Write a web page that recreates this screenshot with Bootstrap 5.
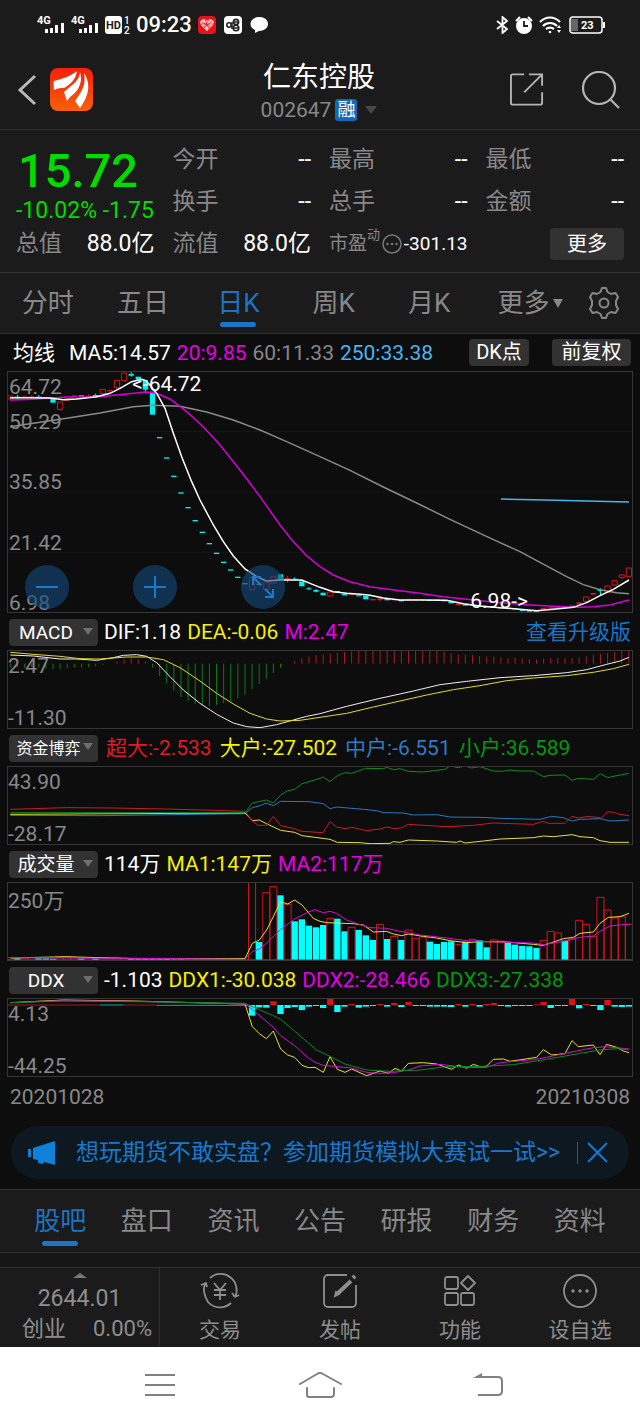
<!DOCTYPE html>
<html lang="zh-CN">
<head>
<meta charset="utf-8">
<meta name="viewport" content="width=device-width, initial-scale=1">
<title>仁东控股 002647</title>
<link href="https://cdn.jsdelivr.net/npm/bootstrap@5.3.0/dist/css/bootstrap.min.css" rel="stylesheet">
<style>
  :root { --panel:#1b1b1b; --ink:#0d0d0d; --line:#303030; --muted:#88888a; --brand:#1c74c4; --down:#00dc00; --up:#e0141e; --mag:#e600e6; --yel:#f5f000; --sky:#4ab4f0; --leaf:#009a10; }
  body { background:var(--ink); color:#fff; font-family:Roboto,"Noto Sans CJK SC",sans-serif; font-size:21px; line-height:28px; }
  button, select { font-family:inherit; color:inherit; line-height:inherit; }
  button { background:none; border:0; padding:0; }
  a { text-decoration:none; }
  svg { display:block; flex-shrink:0; }
  .panel { background:var(--panel); }
  .rule-b { border-bottom:1px solid var(--line); }
  .rule-t { border-top:1px solid var(--line); }
  .dim { color:var(--muted); }
  .brand { color:var(--brand); }
  .mag { color:var(--mag); }
  .yel { color:var(--yel); }
  .sky { color:var(--sky); }
  .leaf { color:var(--leaf); }
  .crimson { color:#e01a28; }
  .steel { color:#2e7cc8; }
  .status { height:50px; padding:0 34px 0 37px; font-size:22px; font-weight:500; }
  .status > div { gap:6px; }
  .apps { gap:8px; }
  .topbar { height:80px; padding:0 16px; }
  .actions { gap:38px; }
  .heading { padding:4px 0 0 2px; }
  .name { font-size:28px; line-height:36px; font-weight:400; }
  .rong { background:#1469b4; font-size:18px; line-height:22px; width:22px; height:22px; border-radius:3px; text-align:center; }
  .caret { width:0; height:0; border:6px solid transparent; border-top:8px solid #484848; border-bottom:0; }
  .caret-s { border-width:5px; border-top:9px solid var(--muted); border-bottom:0; }
  .quote { display:grid; grid-template-columns:repeat(4,minmax(0,1fr)); grid-auto-rows:42px; column-gap:18px; padding:9px 16px 7px; font-size:23px; white-space:nowrap; }
  .last-price { grid-row:span 2; color:var(--down); }
  .last-price strong { font-size:47px; line-height:52px; font-weight:500; padding:6px 0 0 2px; }
  .last-price span { font-size:23px; line-height:28px; }
  .pe { font-size:19px; }
  .pe sup { font-size:13px; line-height:14px; top:-11px; }
  .chip { background:#323233; border-radius:4px; color:#fff; height:27px; font-size:20px; line-height:27px; }
  .chip-dk { width:60px; margin-right:17px; }
  .chip-fq { width:79px; }
  .more-btn { width:74px; height:32px; line-height:32px; }
  .ktabs { height:61px; font-size:26px; }
  .ktabs .tab { flex:0 0 14.9%; }
  .tab { height:100%; position:relative; color:var(--muted); }
  .tab.active { color:var(--brand); }
  .tab.active::after { content:""; position:absolute; left:50%; bottom:6px; width:36px; margin-left:-18px; height:5px; border-radius:3px; background:var(--brand); }
  .legend-row { height:37px; padding:0 9px; gap:6px; white-space:nowrap; }
  .legend-wide { gap:8px; }
  .pick { position:relative; width:89px; }
  .pick select { appearance:none; width:100%; border:0; padding:0 15px 0 0; font-size:19px; text-align:center; text-align-last:center; }
  .pick::after { content:""; position:absolute; right:5px; top:10px; border:5px solid transparent; border-top:7px solid #6e6e6e; border-bottom:0; pointer-events:none; }
  .pick select.four { font-size:16px; padding-right:10px; }
  .plot { position:relative; margin:0 7px; }
  .plot svg { width:100%; height:79px; fill:none; }
  .plot-main svg { height:242px; }
  .plot .frame { position:absolute; inset:0; border:1px solid #363636; }
  .plot svg * { vector-effect:non-scaling-stroke; stroke-width:1; }
  .plot-main svg polyline { stroke-width:1.5; }
  .axis { position:absolute; inset:0; padding:6px 0 1px 1px; line-height:20px; color:var(--muted); }
  .axis-low { padding-top:9px; }
  .axis-main { padding:0 0 0 2px; }
  .axis-main span { flex:1 1 0; display:flex; align-items:flex-end; }
  .axis-main .peak { position:absolute; top:6px; }
  .note { position:absolute; line-height:20px; }
  .note-high { left:20%; top:3px; }
  .note-low { left:74%; bottom:2px; }
  .zoomers { position:absolute; left:18px; bottom:4px; gap:64px; }
  .round { width:44px; height:44px; border-radius:50%; background:rgba(20,72,122,.62); display:flex; align-items:center; justify-content:center; }
  .plot .round svg { width:28px; height:28px; stroke:#1d78cc; }
  .plot .round svg * { stroke-width:2; }
  .dates { height:39px; padding:0 10px; }
  .promo { margin:10px 11px; height:53px; border-radius:27px; background:#0d1820; padding:0 20px 0 17px; font-size:23px; color:#1a78cc; white-space:nowrap; }
  .promo a { color:inherit; }
  .promo .sep { width:1px; height:22px; background:#1a60a0; }
  .subtabs { height:64px; padding:0 17px; font-size:26px; }
  .subtabs .tab { flex:1 1 0; }
  .strip { height:14px; background:#161616; }
  .dock { height:80px; font-size:21px; line-height:30px; color:#8e8e8e; }
  .dock button svg { margin:4px 0 5px; }
  .index-box { border-right:1px solid var(--line); padding-top:5px; font-size:23px; }
  .index-box .up { border:7px solid transparent; border-bottom:5px solid #777; border-top:0; width:0; height:0; margin:0 auto 6px; }
  .index-box .pair { padding:0 7px 0 22px; font-size:22px; }
  .sysbar { background:#fff; height:75px; padding:0 12.5%; }
</style>
</head>
<body>
<header class="panel">
  <div class="status d-flex align-items-center justify-content-between">
    <div class="d-flex align-items-center">
      <svg width="28" height="20" viewBox="0 0 28 20" fill="#fff" aria-label="4G"><text x="0" y="9" font-size="11" font-weight="700">4G</text><path d="M8 14h3v4H8zM13 13h3v5h-3zM18 10h3v8h-3zM24 8h3v10h-3z"/></svg>
      <svg width="28" height="20" viewBox="0 0 28 20" fill="#fff" aria-label="4G"><text x="0" y="9" font-size="11" font-weight="700">4G</text><path d="M8 14h3v4H8zM13 13h3v5h-3zM18 10h3v8h-3zM24 8h3v10h-3z"/></svg>
      <svg width="25" height="20" viewBox="0 0 25 20"><rect y="1" width="17" height="18" rx="3" fill="#fff"/><text x="1" y="14" font-size="11" font-weight="700" fill="#1b1b1b">HD</text><text x="19" y="9" font-size="10" fill="#fff">1</text><text x="19" y="19" font-size="10" fill="#fff">2</text></svg>
      <span>09:23</span>
      <div class="apps d-flex">
        <svg width="18" height="18" viewBox="0 0 18 18"><rect width="18" height="18" rx="4" fill="#e5141c"/><path d="M9 15L3 9C0 5 6 1 9 5c3-4 9 0 6 4z" fill="#ffd7d7"/><path d="M4 6l10 6M14 5L6 12M7 4l4 9M11 4l-5 7M2 8h14" stroke="#e5141c" stroke-width=".8"/></svg>
        <svg width="18" height="18" viewBox="0 0 18 18"><rect width="18" height="18" rx="4" fill="#fff"/><g fill="none" stroke="#222" stroke-width="1.600"><circle cx="5" cy="9" r="2.200"/><path d="M8 6v7"/><circle cx="12" cy="6" r="2.600"/><circle cx="12" cy="12" r="2.800"/><path d="M10 6h4M10 12h4"/></g></svg>
        <svg width="19" height="18" viewBox="0 0 19 18"><path d="M9.500 1C4.500 1 .5 4 .5 8c0 3 2 5 4.500 6L5 17l4-2c5 0 9-3 9-7s-3.500-7-8.500-7z" fill="#fff"/></svg>
      </div>
    </div>
    <div class="d-flex align-items-center">
      <svg width="13" height="18" viewBox="0 0 13 18" fill="none" stroke="#fff" stroke-width="1.800"><path d="M1 5l10 8-4.500 4V1L11 5 1 13"/></svg>
      <svg width="18" height="18" viewBox="0 0 18 18"><circle cx="9" cy="10" r="8" fill="#fff"/><path d="M1 5l4-4M17 5l-4-4" stroke="#fff" stroke-width="2"/><path d="M9 5v5h4" fill="none" stroke="#1b1b1b" stroke-width="1.800"/></svg>
      <svg width="24" height="18" viewBox="0 0 24 18" fill="none" stroke="#fff" stroke-width="2.200"><path d="M1 6c6-6 14-6 20 0M4 10c4-4 10-4 14 0M7 13c3-2 5-2 8 0"/><circle cx="11" cy="16" r="1.300" fill="#fff" stroke="none"/><path d="M18 12l2-3 2 3zM18 14l2 3 2-3z" fill="#fff" stroke="none"/></svg>
      <svg width="37" height="18" viewBox="0 0 37 18"><rect x="1" y="1" width="32" height="16" rx="3" fill="none" stroke="#fff" stroke-width="1.500"/><path d="M2 3h7v12H2z" fill="#666"/><path d="M34 6h2v6h-2z" fill="#fff"/><text x="12" y="13" font-size="11" font-weight="700" fill="#fff">23</text></svg>
    </div>
  </div>
  <div class="topbar rule-b d-flex align-items-center">
    <div class="d-flex align-items-center col">
      <button type="button" aria-label="返回"><svg width="22" height="32" viewBox="0 0 22 32" fill="none" stroke="#b8b8b8" stroke-width="3"><path d="M19 2L4 16l15 14"/></svg></button>
      <a href="#" class="ms-2 ps-1" aria-label="首页"><svg width="43" height="43" viewBox="0 0 43 43"><defs><linearGradient id="lg" x2="0" y2="1"><stop stop-color="#f5200a"/><stop offset="1" stop-color="#f7600a"/></linearGradient></defs><rect width="43" height="43" rx="8" fill="url(#lg)"/><path d="M27 3C20 9 11 11 4 13c-1 3 0 6 0 9 4-2 7-2 10-2 7-4 12-9 13-17zM30 4c0 8-8 13-16 20l3 9c3-5 8-7 11-12 3-6 4-10 2-17zM34 5c2 11-1 17-9 28l5 7c7-10 9-17 8-25-1-5-2-7-4-10z" fill="#fff"/></svg></a>
    </div>
    <div class="heading text-center">
      <h1 class="name mb-0">仁东控股</h1>
      <div class="d-flex align-items-center justify-content-center gap-1"><span class="dim">002647</span><span class="rong">融</span><span class="caret ms-1"></span></div>
    </div>
    <div class="col d-flex justify-content-end align-items-center actions pe-1">
      <button type="button" aria-label="分享"><svg width="34" height="35" viewBox="0 0 36 36" fill="none" stroke="#b4b4b4" stroke-width="2"><path d="M15 2H3q-2 0-2 2v28q0 2 2 2h29q2 0 2-2V21M34 14V2H20M34 2L15 21"/></svg></button>
      <button type="button" aria-label="搜索"><svg width="38" height="38" viewBox="0 0 38 38" fill="none" stroke="#b4b4b4" stroke-width="2.200"><circle cx="17" cy="17" r="16"/><path d="M28 28l9 9"/></svg></button>
    </div>
  </div>
</header>

<main>
  <section class="quote panel rule-b">
    <div class="last-price d-flex flex-column"><strong>15.72</strong><span>-10.02% -1.75</span></div>
    <div class="d-flex justify-content-between align-items-center"><span class="dim">今开</span><span>--</span></div>
    <div class="d-flex justify-content-between align-items-center"><span class="dim">最高</span><span>--</span></div>
    <div class="d-flex justify-content-between align-items-center"><span class="dim">最低</span><span>--</span></div>
    <div class="d-flex justify-content-between align-items-center"><span class="dim">换手</span><span>--</span></div>
    <div class="d-flex justify-content-between align-items-center"><span class="dim">总手</span><span>--</span></div>
    <div class="d-flex justify-content-between align-items-center"><span class="dim">金额</span><span>--</span></div>
    <div class="d-flex justify-content-between align-items-center"><span class="dim">总值</span><span>88.0亿</span></div>
    <div class="d-flex justify-content-between align-items-center"><span class="dim">流值</span><span>88.0亿</span></div>
    <div class="pe d-flex justify-content-between align-items-center"><span class="dim">市盈<sup>动</sup></span><svg width="20" height="20" viewBox="0 0 20 20" fill="#777"><circle cx="10" cy="10" r="9" fill="none" stroke="#777" stroke-width="1.500"/><circle cx="5.500" cy="10" r="1.200"/><circle cx="10" cy="10" r="1.200"/><circle cx="14.500" cy="10" r="1.200"/></svg><span>-301.13</span></div>
    <div class="d-flex justify-content-end align-items-center"><button type="button" class="chip more-btn">更多</button></div>
  </section>

  <nav class="ktabs panel rule-b d-flex align-items-center">
    <button type="button" class="tab">分时</button>
    <button type="button" class="tab">五日</button>
    <button type="button" class="tab active">日K</button>
    <button type="button" class="tab">周K</button>
    <button type="button" class="tab">月K</button>
    <button type="button" class="tab flex-fill d-flex align-items-center justify-content-center gap-1 ps-1">更多<span class="caret caret-s"></span></button>
    <button type="button" class="ps-2 pe-3 me-1" aria-label="设置"><svg width="32" height="32" viewBox="0 0 32 32" fill="none" stroke="#88888a" stroke-width="2"><path d="M12.500 5L14 1h4l1.500 4 3.500 2 4.500-1L30 10l-2 4v4l2 4-2.500 4-4.500-1-3.500 2-1.500 4h-4l-1.500-4L9 25l-4.500 1L2 22l2-4v-4l-2-4 2.500-4L9 7z" stroke-linejoin="round"/><circle cx="16" cy="16" r="4.500"/></svg></button>
  </nav>

  <section>
    <div class="legend-row d-flex align-items-center">
      <span class="px-1 me-1">均线</span>
      <span>MA5:14.57</span><span class="mag">20:9.85</span><span class="dim">60:11.33</span><span class="sky">250:33.38</span>
      <button type="button" class="chip chip-dk ms-auto">DK点</button>
      <button type="button" class="chip chip-fq">前复权</button>
    </div>
    <div class="plot plot-main">
      <div class="axis axis-main d-flex flex-column"><span class="peak">64.72</span><span>50.29</span><span>35.85</span><span>21.42</span><span>6.98</span></div>
      <svg id="kline" viewBox="21 123 1878 726" preserveAspectRatio="none" role="img" aria-label="日K线">
        <path d="M22 305H1898M22 486H1898M22 667H1898" stroke="#222" stroke-dasharray="1 1"/>
        <g class="bars"></g>
        <polyline stroke="#8a8a8a" points="30,290 100,280 200,265 300,249 400,230 460,226 540,229 620,246 700,270 780,300 860,335 960,380 1050,421 1150,471 1250,519 1350,568 1440,610 1500,638 1560,665 1620,697 1700,740 1750,764 1800,779 1850,788 1887,791"/>
        <polyline stroke="#d800d8" points="30,210 100,208 200,201 300,200 380,192 436,186 468,189 510,207 560,245 610,290 660,345 720,420 780,500 840,585 880,635 920,677 960,710 1000,735 1050,755 1110,770 1200,782 1260,790 1330,800 1400,808 1500,818 1580,824 1660,829 1730,832 1780,830 1830,825 1887,810"/>
        <polyline stroke="#fff" points="30,203 90,203 150,204 190,209 230,207 290,200 330,190 360,175 395,155 425,148 436,151 450,165 472,193 495,235 520,310 545,380 575,455 600,510 640,585 670,635 700,678 735,717 770,740 799,753 842,750 905,750 930,760 960,772 1000,785 1040,790 1080,793 1110,796 1150,804 1200,810 1260,810 1340,811 1390,821 1440,828 1500,833 1560,838 1610,842 1660,838 1720,832 1760,818 1800,797 1840,778 1887,750"/>
        <polyline stroke="#4ab4e8" points="1503,507 1600,509 1760,513 1887,516"/>
      </svg>
      <div class="frame"></div>
      <span class="note note-high">&lt;-64.72</span>
      <span class="note note-low">6.98-&gt;</span>
      <div class="zoomers d-flex">
        <button type="button" class="round" aria-label="缩小"><svg viewBox="0 0 28 28"><path d="M3 14h22"/></svg></button>
        <button type="button" class="round" aria-label="放大"><svg viewBox="0 0 28 28"><path d="M3 14h22M14 3v22"/></svg></button>
        <button type="button" class="round" aria-label="全屏"><svg viewBox="0 0 28 28"><path d="M4 12V4h8M4 4l8 8M24 16v8h-8M24 24l-8-8"/></svg></button>
      </div>
    </div>
  </section>

  <section>
    <div class="legend-row d-flex align-items-center">
      <label class="pick"><select class="chip" aria-label="指标一"><option>MACD</option></select></label>
      <span>DIF:1.18</span><span class="yel">DEA:-0.06</span><span class="mag">M:2.47</span>
      <a href="#" class="brand ms-auto">查看升级版</a>
    </div>
    <div class="plot">
      <div class="axis d-flex flex-column justify-content-between"><span>2.47</span><span>-11.30</span></div>
      <svg id="macd" viewBox="21 15 1878 237" preserveAspectRatio="none" role="img" aria-label="MACD">
        <g class="bars"></g>
        <polyline stroke="#eee" points="31,30 100,33 180,42 230,42 290,46 340,38 370,31 410,29 440,34 470,53 510,95 550,135 600,175 650,208 700,234 740,245 780,248 830,239 880,225 920,214 960,206 1040,184 1140,160 1240,138 1320,119 1400,109 1500,98 1600,92 1700,83 1760,74 1820,58 1860,48 1887,37"/>
        <polyline stroke="#e0dc20" points="31,22 100,28 180,34 240,41 300,42 380,36 440,36 490,44 540,68 600,108 650,145 700,177 750,205 800,222 840,228 900,226 960,217 1040,205 1120,186 1200,168 1280,150 1360,134 1440,122 1520,107 1600,99 1700,92 1780,82 1840,71 1887,58"/>
      </svg>
      <div class="frame"></div>
    </div>
  </section>

  <section>
    <div class="legend-row legend-wide d-flex align-items-center">
      <label class="pick"><select class="chip four" aria-label="指标二"><option>资金博弈</option></select></label>
      <span class="crimson">超大:-2.533</span><span class="yel">大户:-27.502</span><span class="steel">中户:-6.551</span><span class="leaf">小户:36.589</span>
    </div>
    <div class="plot">
      <div class="axis d-flex flex-column justify-content-between"><span>43.90</span><span>-28.17</span></div>
      <svg viewBox="21 363 1878 237" preserveAspectRatio="none" role="img" aria-label="资金博弈">
        <polyline stroke="#2878c0" points="31,511 300,512 735,506 757,488 777,483 799,474 820,482 842,469 927,470 970,476 990,491 1010,486 1090,493 1130,497 1150,503 1210,504 1240,510 1310,509 1350,516 1440,517 1500,520 1620,523 1655,514 1690,518 1715,528 1740,523 1800,521 1830,528 1887,525"/>
        <polyline stroke="#e8e030" points="31,508 735,504 757,527 778,525 799,536 842,556 884,562 906,572 960,579 990,583 1012,592 1080,593 1110,596 1170,595 1180,590 1200,592 1225,585 1310,588 1370,592 1380,588 1395,594 1450,588 1500,582 1600,578 1630,573 1660,575 1716,569 1740,575 1780,578 1800,587 1830,592 1887,592"/>
        <polyline stroke="#d01824" points="31,493 200,488 340,489 500,492 640,496 735,499 757,528 775,541 800,541 820,514 842,542 880,550 906,559 969,563 990,530 1010,546 1035,551 1055,547 1100,557 1140,552 1160,546 1185,551 1205,548 1225,538 1340,545 1420,541 1480,534 1600,538 1630,529 1645,535 1695,535 1716,514 1735,519 1765,514 1805,519 1822,500 1840,502 1860,508 1887,512"/>
        <polyline stroke="#0a8c1e" points="31,503 735,503 757,474 799,465 820,474 842,450 863,437 884,433 906,416 927,410 960,400 970,396 990,410 1012,392 1034,383 1055,385 1097,370 1150,371 1160,367 1180,374 1200,371 1225,379 1270,381 1310,376 1335,373 1350,363 1375,368 1395,363 1415,369 1440,365 1480,378 1505,379 1530,375 1560,378 1600,378 1630,395 1650,391 1695,390 1715,406 1735,400 1780,403 1801,386 1823,398 1845,393 1887,385"/>
      </svg>
      <div class="frame"></div>
    </div>
  </section>

  <section>
    <div class="legend-row d-flex align-items-center">
      <label class="pick"><select class="chip" aria-label="指标三"><option>成交量</option></select></label>
      <span>114万</span><span class="yel">MA1:147万</span><span class="mag">MA2:117万</span>
    </div>
    <div class="plot">
      <div class="axis axis-low"><span>250万</span></div>
      <svg id="volume" viewBox="21 96 1878 237" preserveAspectRatio="none" role="img" aria-label="成交量">
        <g class="bars"></g>
        <polyline stroke="#e8e030" points="31,324 200,320 360,325 540,326 735,326 757,280 778,270 800,240 842,155 863,162 884,150 906,165 940,205 960,214 980,218 1060,221 1090,225 1120,246 1160,244 1180,252 1205,257 1225,252 1270,259 1310,264 1350,272 1400,278 1440,275 1520,276 1600,283 1630,286 1655,278 1690,266 1720,262 1740,250 1780,246 1800,220 1825,202 1860,200 1887,190"/>
        <polyline stroke="#d010d0" points="31,323 360,325 540,326 735,328 757,305 778,297 799,280 842,238 884,207 925,186 945,179 970,188 990,184 1010,190 1040,210 1080,224 1110,233 1160,235 1200,244 1260,255 1340,264 1400,272 1500,276 1600,279 1630,284 1680,276 1740,262 1780,258 1800,244 1830,228 1887,222"/>
      </svg>
      <div class="frame"></div>
    </div>
  </section>

  <section>
    <div class="legend-row d-flex align-items-center">
      <label class="pick"><select class="chip" aria-label="指标四"><option>DDX</option></select></label>
      <span>-1.103</span><span class="yel">DDX1:-30.038</span><span class="mag">DDX2:-28.466</span><span class="leaf">DDX3:-27.338</span>
    </div>
    <div class="plot">
      <div class="axis d-flex flex-column justify-content-between"><span>4.13</span><span>-44.25</span></div>
      <svg id="ddx" viewBox="21 444 1878 237" preserveAspectRatio="none" role="img" aria-label="DDX">
        <g class="bars"></g>
        <polyline stroke="#e8e030" points="31,458 190,450 400,453 735,462 757,530 778,551 799,566 820,543 842,597 863,615 884,622 906,646 925,653 945,652 970,667 990,620 1012,658 1035,667 1055,657 1100,677 1140,663 1165,670 1185,655 1205,663 1225,640 1270,638 1310,642 1355,658 1375,645 1400,655 1420,643 1445,652 1460,648 1480,628 1510,627 1530,634 1610,622 1630,599 1655,615 1695,611 1716,572 1735,590 1780,585 1800,614 1820,583 1850,592 1870,603 1887,608"/>
        <polyline stroke="#d010d0" points="31,458 190,452 400,454 735,462 757,478 820,532 842,557 884,587 925,624 945,637 970,646 1055,654 1100,667 1140,670 1180,668 1225,660 1260,648 1320,643 1400,653 1460,652 1500,638 1600,629 1640,622 1700,609 1780,593 1820,590 1887,597"/>
        <polyline stroke="#0a8c1e" points="31,458 190,453 400,455 735,460 757,470 820,497 842,508 880,540 950,600 970,609 1035,642 1100,660 1170,664 1260,660 1340,650 1450,649 1540,644 1640,628 1740,610 1800,600 1850,596 1887,599"/>
      </svg>
      <div class="frame"></div>
    </div>
    <div class="dates dim d-flex align-items-center justify-content-between"><span>20201028</span><span>20210308</span></div>
  </section>

  <aside class="promo d-flex align-items-center">
    <svg width="28" height="26" viewBox="0 0 28 26" fill="#1080d8"><path d="M0 9h3v8H0zM5 8l22-7v24l-11-3-1 2-5-1v-3l-5-1z"/></svg>
    <a href="#" class="ms-3 ps-1 flex-fill">想玩期货不敢实盘？参加期货模拟大赛试一试&gt;&gt;</a>
    <span class="sep"></span>
    <button type="button" class="ms-2" aria-label="关闭"><svg width="23" height="21" viewBox="0 0 23 21" stroke="#1a78cc" stroke-width="2"><path d="M2 1l19 19M21 1L2 20"/></svg></button>
  </aside>

  <nav class="subtabs panel rule-t rule-b d-flex">
    <button type="button" class="tab active">股吧</button>
    <button type="button" class="tab">盘口</button>
    <button type="button" class="tab">资讯</button>
    <button type="button" class="tab">公告</button>
    <button type="button" class="tab">研报</button>
    <button type="button" class="tab">财务</button>
    <button type="button" class="tab">资料</button>
  </nav>
  <div class="strip"></div>
</main>

<footer>
  <div class="dock panel rule-t d-flex">
    <div class="index-box col-3">
      <div class="up"></div>
      <div class="text-center">2644.01</div>
      <div class="pair d-flex justify-content-between"><span>创业</span><span>0.00%</span></div>
    </div>
    <button type="button" class="col d-flex flex-column align-items-center"><svg width="40" height="38" viewBox="0 0 40 38" fill="none" stroke="#8e8e8e" stroke-width="1.800"><path d="M8 30A16 16 0 0 0 31 31M10 6A16 16 0 0 1 35 25M35 25l-3-4M35 25l4-2M5 12c-3 7 0 13 3 18M1 13l5-2 1 4M14 11l6 7 6-7M14 18h12M14 23h12M20 18v10"/></svg>交易</button>
    <button type="button" class="col d-flex flex-column align-items-center"><svg width="40" height="38" viewBox="0 0 40 38" fill="none" stroke="#8e8e8e" stroke-width="1.800"><path d="M27 3H8a4 4 0 0 0-4 4v24a4 4 0 0 0 4 4h24a4 4 0 0 0 4-4V13"/><path d="M17 22L31 9M33 6l2-2" stroke-width="4"/><path d="M15 24l1-4 3 2z" fill="#8e8e8e"/></svg>发帖</button>
    <button type="button" class="col d-flex flex-column align-items-center"><svg width="40" height="38" viewBox="0 0 40 38" fill="none" stroke="#8e8e8e" stroke-width="1.800"><rect x="5" y="5" width="13" height="12" rx="2"/><rect x="5" y="21" width="13" height="12" rx="2"/><rect x="21" y="21" width="13" height="12" rx="2"/><path d="M28 4l7 7-7 7-7-7z" stroke-linejoin="round"/></svg>功能</button>
    <button type="button" class="col d-flex flex-column align-items-center"><svg width="40" height="38" viewBox="0 0 40 38" fill="#8e8e8e"><circle cx="20" cy="19" r="16" fill="none" stroke="#8e8e8e" stroke-width="1.800"/><circle cx="13" cy="19" r="1.700"/><circle cx="20" cy="19" r="1.700"/><circle cx="27" cy="19" r="1.700"/></svg>设自选</button>
  </div>
  <div class="sysbar d-flex align-items-center">
    <button type="button" class="col d-flex justify-content-center" aria-label="菜单"><svg width="50" height="26" viewBox="0 0 50 26" stroke="#808080" stroke-width="2"><path d="M10 3h30M10 13h30M10 23h30"/></svg></button>
    <button type="button" class="col d-flex justify-content-center" aria-label="主屏"><svg width="50" height="28" viewBox="0 0 50 28" fill="none" stroke="#808080" stroke-width="2" stroke-linecap="round"><path d="M5 13L22 3q3-2 6 0l18 10M12 17v7q0 2 2 2h22q3 0 3-3v-6"/></svg></button>
    <button type="button" class="col d-flex justify-content-center" aria-label="返回上级"><svg width="50" height="26" viewBox="0 0 50 26" fill="none" stroke="#808080" stroke-width="2"><path d="M21 5h22q4 0 4 4v10q0 4-4 4H23"/><path d="M18 6l9-5v5z" fill="#808080" stroke="none"/></svg></button>
  </div>
</footer>

<script src="https://cdn.jsdelivr.net/npm/bootstrap@5.3.0/dist/js/bootstrap.bundle.min.js"></script>
<script>
  // One trading day is 21.33 units wide; day 0 is centred on x = 31.
  const UP = '#d8141e', DOWN = '#00f0f0', STEP = 21.33;
  const mid = i => 31 + STEP * i;
  const layer = id => document.querySelector('#' + id + ' .bars');
  function add(g, tag, attrs) {
    const e = document.createElementNS('http://www.w3.org/2000/svg', tag);
    for (const k in attrs) e.setAttribute(k, attrs[k]);
    g.appendChild(e);
  }
  // Candles: day, direction (h = hollow rise, r = flat rise, c = fall), body top, body bottom, wick top, wick bottom
  const candles = `0h198,207 1c200,203,195,208 2r199,203 3r199,204,196,207 4c200,203,195,207 5r201,206 6c206,218 7h216,238,216,242 8r205,212 9r196,200 10c196,199 11r197,201,193,204 12c195,198,191,200 13h178,190 14r180,184 15h151,173,151,180 16h129,152 17c132,137,125,140 18c140,149 19c150,179,150,186 20c185,254
   21c321,325 22c382,386 23c437,441 24c487,491 25c531,535 26c570,574 27c605,609 28c639,643 29c668,672 30c695,699 31c718,722 32c740,744 33c759,763 34h742,779 35c761,765 36h757,779 37h740,760 38c733,750 39r744,748,738,758 40c746,748,742,751 41c754,769 42c775,778,771,780 43c780,785,777,787 44c788,796 45h786,798
   46c783,788 47c792,796 48r791,795 49c796,799 50c798,808 51r807,811 52r805,810,803,815 53c807,811 54r808,811 55c810,814 56r808,812 57r808,811 58r808,811 59c809,812 60c809,812 61c810,814 62c815,820 63r821,825 64c823,827 65r825,828 66c827,830 67c829,832 68r830,833 69c832,835 70c833,836 71c835,838 72c838,843 73c841,845 74c842,845
   75r834,838 76r832,836 77r831,834 78r830,833 79r826,829 80r817,823,817,827 81h801,814 82r789,794 83c779,783,775,796 84h768,787 85h752,765,752,768 86h735,742,735,749 87h714,739`;
  for (const c of candles.split(/\s+/)) {
    const [, i, t, rest] = c.match(/^(\d+)([hrc])(.*)$/), [a, b, w1, w2] = rest.split(',').map(Number);
    const color = t === 'c' ? DOWN : UP, g = layer('kline');
    if (w1) add(g, 'path', { d: `M${mid(i)} ${w1}V${t === 'h' ? a : w2}M${mid(i)} ${t === 'h' ? b : w2}V${w2}`, stroke: color });
    add(g, 'rect', { x: mid(i) - 8, y: a, width: 16, height: b - a, fill: t === 'h' ? 'none' : color, stroke: t === 'h' ? color : 'none' });
  }
  // MACD columns grow from y = 56
  const macd = [68,66,68,66,68,70,72,72,70,68,67,66,64,60,56,50,44,40,44,50,68,93,116,137,156,168,177,180,182,180,174,168,160,149,132,117,101,84,68,56,47,40,34,30,29,26,23,21,19,18,17,17,17,17,17,17,17,17,17,17,18,20,25,28,29,30,33,35,35,37,39,38,41,42,43,41,39,39,40,39,37,34,29,27,24,21,18,15];
  macd.forEach((y, i) => add(layer('macd'), 'path', { d: `M${mid(i)} 56V${y}`, stroke: y > 56 ? '#0a7a14' : '#b01820' }));
  // Volume tops above the base line at y = 330
  const volume = 'r323 c325 r324 r323 c325 c325 c326 r322 r322 r323 c325 r324 c325 r323 r323 r322 r324 c325 c326 c325 c326 c326 c327 c328 c328 c329 c329 c329 c329 c329 c329 c329 c329 c329 r97 c276 r128 r110 c136 r163 c214 c208 c227 c232 c225 r205 c206 c244 r232 c240 c256 c270 r223 c267 r259 c270 r240 r266 r261 c275 c282 c276 c274 r284 c275 r268 c271 c292 r270 r273 c279 c284 c288 c289 c294 r271 r244 r249 c272 r267 r211 r223 r260 r142 r180 r204 r199 r223';
  volume.split(' ').forEach((v, i) => {
    const y = +v.slice(1), up = v[0] === 'r';
    add(layer('volume'), 'rect', { x: mid(i) - (up ? 10.5 : 9.5), y, width: up ? 21 : 19, height: 330 - y, fill: up ? 'none' : '#00ffff', stroke: up ? UP : 'none' });
  });
  add(layer('volume'), 'path', { d: 'M22 330H1898', stroke: '#b01850' });
  // DDX blocks hang from or stand on y = 465; the first 34 days are flat
  const ddx = [497,472,473,454,492,474,471,480,470,468,474,444,486,470,462,473,470,468,462,470,459,471,456,468,468,470,470,470,471,462,470,462,470,462,459,468,470,468,468,468,463,456,474,468,468,446,475,462,468,480,450,470,471,470];
  add(layer('ddx'), 'path', { d: 'M22 465H300M370 465H470', stroke: '#a01820' });
  add(layer('ddx'), 'path', { d: 'M300 465H370M470 466H745', stroke: '#10a0a8' });
  ddx.forEach((y, k) => add(layer('ddx'), 'rect', { x: mid(k + 34) - 9.5, y: Math.min(y, 465), width: 19, height: Math.abs(y - 465), fill: y > 465 ? '#00ffff' : '#e0101a' }));
</script>
</body>
</html>
